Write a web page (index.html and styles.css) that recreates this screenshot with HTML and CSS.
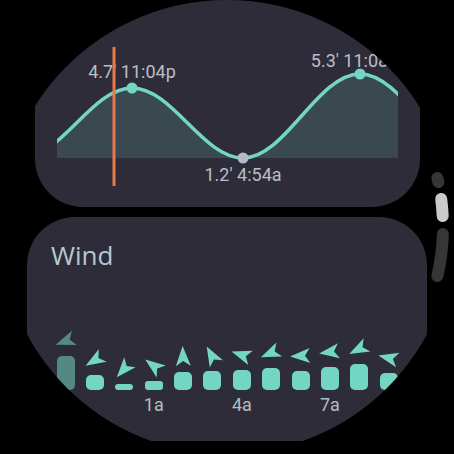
FILE: index.html
```html
<!DOCTYPE html>
<html lang="en">
<head>
<meta charset="utf-8">
<title>Tide and Wind</title>
<link rel="stylesheet" href="styles.css">
</head>
<body>
<div class="screen">
  <section class="card tide">
    <svg class="tide-chart" viewBox="34 0 385 207" width="385" height="207">
      <defs>
        <clipPath id="plot"><rect x="56" y="0" width="341" height="200"/></clipPath>
      </defs>
      <path class="tide-fill" clip-path="url(#plot)" d="M20,158 C60.4,158 90.6,88 131,88 C171.4,88 201.6,158 242,158 C284.6,158 316.4,74 359,74 C401.6,74 433.4,158 476,158 Z"/>
      <path class="tide-line" clip-path="url(#plot)" d="M20,158 C60.4,158 90.6,88 131,88 C171.4,88 201.6,158 242,158 C284.6,158 316.4,74 359,74 C401.6,74 433.4,158 476,158"/>
      <circle class="dot-high" cx="131" cy="88" r="5.5"/>
      <circle class="dot-high" cx="359" cy="74" r="5.5"/>
      <circle class="dot-low" cx="242" cy="158" r="5.5"/>
      <text class="tide-label" x="131" y="78" text-anchor="middle">4.7' 11:04p</text>
      <text class="tide-label" x="242" y="181" text-anchor="middle">1.2' 4:54a</text>
      <text class="tide-label" x="397" y="67" text-anchor="end">5.3' 11:08a</text>
      <line class="now-line" x1="113" y1="47" x2="113" y2="186"/>
    </svg>
  </section>

  <section class="card wind">
    <h2 class="wind-title">Wind</h2>
    <div class="wind-chart">
      <div class="col past">
        <svg class="arrow" viewBox="-12 -12 24 24"><polygon points="0,-11 7.5,9 0,4 -7.5,9" transform="rotate(250)"/></svg>
        <div class="bar" style="height:34px"></div>
        <span class="hour">10p</span>
      </div>
      <div class="col">
        <svg class="arrow" viewBox="-12 -12 24 24"><polygon points="0,-11 7.5,9 0,4 -7.5,9" transform="rotate(239)"/></svg>
        <div class="bar" style="height:15px"></div>
        <span class="hour"></span>
      </div>
      <div class="col">
        <svg class="arrow" viewBox="-12 -12 24 24"><polygon points="0,-11 7.5,9 0,4 -7.5,9" transform="rotate(221)"/></svg>
        <div class="bar thin" style="height:6px"></div>
        <span class="hour"></span>
      </div>
      <div class="col">
        <svg class="arrow" viewBox="-12 -12 24 24"><polygon points="0,-11 7.5,9 0,4 -7.5,9" transform="rotate(307)"/></svg>
        <div class="bar thin" style="height:9px"></div>
        <span class="hour">1a</span>
      </div>
      <div class="col">
        <svg class="arrow" viewBox="-12 -12 24 24"><polygon points="0,-11 7.5,9 0,4 -7.5,9" transform="rotate(358)"/></svg>
        <div class="bar" style="height:18px"></div>
        <span class="hour"></span>
      </div>
      <div class="col">
        <svg class="arrow" viewBox="-12 -12 24 24"><polygon points="0,-11 7.5,9 0,4 -7.5,9" transform="rotate(331)"/></svg>
        <div class="bar" style="height:19px"></div>
        <span class="hour"></span>
      </div>
      <div class="col">
        <svg class="arrow" viewBox="-12 -12 24 24"><polygon points="0,-11 7.5,9 0,4 -7.5,9" transform="rotate(288)"/></svg>
        <div class="bar" style="height:20px"></div>
        <span class="hour">4a</span>
      </div>
      <div class="col">
        <svg class="arrow" viewBox="-12 -12 24 24"><polygon points="0,-11 7.5,9 0,4 -7.5,9" transform="rotate(247)"/></svg>
        <div class="bar" style="height:22px"></div>
        <span class="hour"></span>
      </div>
      <div class="col">
        <svg class="arrow" viewBox="-12 -12 24 24"><polygon points="0,-11 7.5,9 0,4 -7.5,9" transform="rotate(267)"/></svg>
        <div class="bar" style="height:19px"></div>
        <span class="hour"></span>
      </div>
      <div class="col">
        <svg class="arrow" viewBox="-12 -12 24 24"><polygon points="0,-11 7.5,9 0,4 -7.5,9" transform="rotate(262)"/></svg>
        <div class="bar" style="height:23px"></div>
        <span class="hour">7a</span>
      </div>
      <div class="col">
        <svg class="arrow" viewBox="-12 -12 24 24"><polygon points="0,-11 7.5,9 0,4 -7.5,9" transform="rotate(243)"/></svg>
        <div class="bar" style="height:26px"></div>
        <span class="hour"></span>
      </div>
      <div class="col">
        <svg class="arrow" viewBox="-12 -12 24 24"><polygon points="0,-11 7.5,9 0,4 -7.5,9" transform="rotate(283)"/></svg>
        <div class="bar" style="height:17px"></div>
        <span class="hour"></span>
      </div>
    </div>
  </section>

  <svg class="scroll-indicator" viewBox="0 0 454 454" width="454" height="454">
    <path class="track" d="M437.4,178.0 A216,216 0 0 1 438.3,182.1"/>
    <path class="thumb" d="M441.2,199.0 A216,216 0 0 1 442.7,216.0"/>
    <path class="track" d="M442.9,234.0 A216,216 0 0 1 437.4,276.0"/>
  </svg>
</div>
</body>
</html>
```

FILE: styles.css
```css
html, body {
  margin: 0;
  padding: 0;
  background: #000;
}

.screen {
  position: relative;
  width: 454px;
  height: 454px;
  border-radius: 50%;
  overflow: hidden;
  background: #000;
  display: flex;
  flex-direction: column;
  align-items: center;
}

.card {
  background: #2f2c39;
  border-radius: 48px;
  box-sizing: border-box;
  flex: none;
}

.tide {
  width: 385px;
  height: 207px;
  overflow: hidden;
}

.tide-chart {
  display: block;
}

.tide-fill {
  fill: #3a4950;
}

.tide-line {
  fill: none;
  stroke: #72d6c2;
  stroke-width: 3.5;
}

.dot-high {
  fill: #72d6c2;
}

.dot-low {
  fill: #b4bcc2;
}

.tide-label {
  font-family: Roboto, "Liberation Sans", sans-serif;
  font-size: 18px;
  fill: #b9bfc5;
}

.now-line {
  stroke: #e8784c;
  stroke-width: 3;
}

.wind {
  width: 400px;
  height: 224px;
  margin-top: 10px;
  padding: 22px 0 0 24px;
  overflow: hidden;
}

.wind-title {
  margin: 0;
  font-family: "Open Sans", Roboto, sans-serif;
  font-weight: 500;
  font-size: 26px;
  line-height: 32px;
  color: #b7c8cf;
}

.wind-chart {
  display: flex;
  align-items: flex-end;
  height: 145px;
}

.col {
  flex: none;
  width: 29.36px;
  display: flex;
  flex-direction: column;
  align-items: center;
}

.col.past {
  opacity: 0.55;
}

.arrow {
  display: block;
  width: 24px;
  height: 24px;
  margin-bottom: 3px;
  fill: #72d6c2;
  overflow: visible;
}

.bar {
  width: 18px;
  background: #72d6c2;
  border-radius: 5px;
}

.bar.thin {
  border-radius: 3px;
}

.hour {
  display: block;
  height: 22px;
  margin-top: 4px;
  line-height: 22px;
  font-family: Roboto, "Liberation Sans", sans-serif;
  font-size: 18px;
  color: #b5bcc2;
  white-space: nowrap;
}

.scroll-indicator {
  position: absolute;
  left: 0;
  top: 0;
  pointer-events: none;
}

.scroll-indicator path {
  fill: none;
  stroke-width: 12;
  stroke-linecap: round;
}

.scroll-indicator .track {
  stroke: #343735;
}

.scroll-indicator .thumb {
  stroke: #cacaca;
}
```
